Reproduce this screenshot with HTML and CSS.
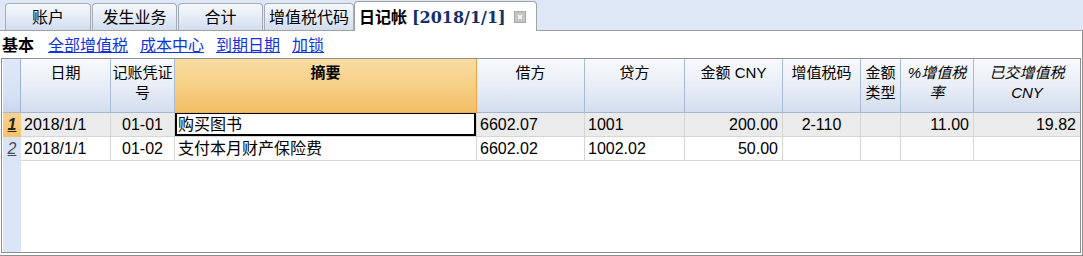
FILE: index.html
```html
<!DOCTYPE html>
<html lang="zh-CN">
<head>
<meta charset="utf-8">
<title>日记帐</title>
<link rel="stylesheet" href="styles.css">
</head>
<body>
<div class="tabbar">
  <div class="tab t1">账户</div>
  <div class="tab t2">发生业务</div>
  <div class="tab t3">合计</div>
  <div class="tab t4">增值税代码</div>
  <div class="tab active">
    <span class="tname">日记帐</span>
    <span class="tdate">[2018/1/1]</span>
    <svg class="close" width="12" height="12" viewBox="0 0 12 12">
      <rect x="0.5" y="0.5" width="11" height="11" fill="#c4c4c4" stroke="#a8a8a8"/>
      <path d="M4 4 L8 8 M8 4 L4 8" stroke="#ffffff" stroke-width="1.4"/>
    </svg>
  </div>
</div>
<div class="panel">
  <div class="toolbar">
    <span class="cur">基本</span>
    <a class="lnk" href="#">全部增值税</a>
    <a class="lnk" href="#">成本中心</a>
    <a class="lnk" href="#">到期日期</a>
    <a class="lnk" href="#">加锁</a>
  </div>
  <div class="grid">
    <div class="h rn"></div>
    <div class="h">日期</div>
    <div class="h">记账凭证号</div>
    <div class="h sel">摘要</div>
    <div class="h">借方</div>
    <div class="h">贷方</div>
    <div class="h">金额 CNY</div>
    <div class="h">增值税码</div>
    <div class="h">金额类型</div>
    <div class="h it">%增值税率</div>
    <div class="h it last">已交增值税CNY</div>

    <div class="n cur-n"><span>1</span></div>
    <div class="c on">2018/1/1</div>
    <div class="c on ctr">01-01</div>
    <div class="c on edit">购买图书</div>
    <div class="c on">6602.07</div>
    <div class="c on">1001</div>
    <div class="c on r">200.00</div>
    <div class="c on ctr">2-110</div>
    <div class="c on"></div>
    <div class="c on r">11.00</div>
    <div class="c on r last">19.82</div>

    <div class="n"><span>2</span></div>
    <div class="c">2018/1/1</div>
    <div class="c ctr">01-02</div>
    <div class="c">支付本月财产保险费</div>
    <div class="c">6602.02</div>
    <div class="c">1002.02</div>
    <div class="c r">50.00</div>
    <div class="c ctr"></div>
    <div class="c"></div>
    <div class="c r"></div>
    <div class="c r last"></div>

    <div class="n fill"></div>
    <div class="empty"></div>
  </div>
</div>
</body>
</html>
```

FILE: styles.css
```css
* { box-sizing: border-box; }
html, body { margin: 0; padding: 0; }
body {
  width: 1083px;
  height: 256px;
  overflow: hidden;
  background: #dde7f6;
  font-family: "Liberation Sans", "Noto Sans CJK SC", sans-serif;
  color: #000;
  display: flex;
  flex-direction: column;
}

/* ---------- tabs ---------- */
.tabbar {
  height: 30px;
  display: flex;
  align-items: flex-end;
  padding-left: 5px;
  flex: none;
}
.tab {
  height: 27px;
  border: 1px solid #a4acb8;
  border-bottom: none;
  border-radius: 4px 4px 0 0;
  background: linear-gradient(#f6f8fc 0%, #e6edf7 45%, #d2ddee 100%);
  font-size: 16px;
  line-height: 24px;
  padding-top: 2px;
  text-align: center;
  white-space: nowrap;
}
.t1 { width: 86px; margin-right: 1px; }
.t2 { width: 85px; margin-right: 1px; }
.t3 { width: 85px; margin-right: 1px; }
.t4 { width: 90px; }
.tab.active {
  width: 183px;
  height: 30px;
  margin-bottom: -1px;
  position: relative;
  z-index: 2;
  background: #fff;
  border-color: #a0a0a0;
  text-align: left;
  padding: 3px 0 0 4px;
  display: flex;
  align-items: center;
  align-self: flex-end;
}
.tname { font-weight: bold; line-height: 24px; }
.tdate {
  font-family: "DejaVu Serif", serif;
  font-weight: bold;
  font-size: 16px;
  color: #13306a;
  margin-left: 5px;
  line-height: 24px;
}
.close { margin-left: 8px; margin-top: -3px; flex: none; }

/* ---------- panel ---------- */
.panel {
  flex: 1;
  background: #fff;
  border-top: 1px solid #a0a0a0;
  border-right: 1px solid #8f8f8f;
  border-bottom: 1px solid #8f8f8f;
  display: flex;
  flex-direction: column;
  min-height: 0;
}
.toolbar {
  height: 27px;
  flex: none;
  display: flex;
  align-items: center;
  gap: 12px;
  padding: 3px 0 0 2px;
  font-size: 16px;
  line-height: 22px;
}
.cur { font-weight: bold; margin-right: 2px; }
.lnk { color: #1133dd; text-decoration: underline; }

/* ---------- grid ---------- */
.grid {
  flex: 1;
  margin: 0 1px 2px 1px;
  border: 1px solid #8e8e8e;
  padding-left: 1px;
  display: grid;
  grid-template-columns: 18px 90px 64px 302px 108px 100px 98px 78px 40px 73px 106px;
  grid-template-rows: 54px 24px 24px 1fr;
  min-height: 0;
}
.h {
  background: linear-gradient(#f7f9fd 0%, #e9eef7 50%, #d3ddee 100%);
  border-right: 1px solid #a7bbd8;
  border-bottom: 1px solid #a3b6d2;
  font-size: 15px;
  line-height: 20px;
  padding: 4px 1px 0;
  text-align: center;
}
.h.rn {
  background: linear-gradient(#dfe8f8 0%, #d5e1f5 70%, #c8d6ee 100%);
  border-right: 1px solid #9db4d6;
  padding: 0;
}
.h.sel {
  background: linear-gradient(#f9dda2 0%, #f6cf86 50%, #f2be64 100%);
  border-right: 1px solid #f0a444;
  border-bottom: 1px solid #e8b060;
  font-weight: bold;
}
.h.it { font-style: italic; }
.h.last, .c.last { border-right: none; }

.n {
  background: #d9e5f7;
  font-size: 16px;
  line-height: 23px;
  text-align: center;
  font-style: italic;
}
.n span { text-decoration: underline; color: #4a4a52; }
.n.cur-n { background: linear-gradient(#f9d391, #f5c36c); }
.n.cur-n span { font-weight: bold; color: #2a2418; }
.n.fill { background: #dae6f8; }

.c {
  border-right: 1px solid #d6d6d6;
  border-bottom: 1px solid #d6d6d6;
  font-size: 16px;
  line-height: 23px;
  padding: 0 3px;
  white-space: nowrap;
  overflow: hidden;
}
.c.on { background: #ebebeb; }
.c.r { text-align: right; padding-right: 4px; }
.c.ctr { text-align: center; }
.c.edit {
  background: #fff;
  box-shadow: inset 2px 1px 0 #000, inset -2px -2px 0 #000;
}
.empty { grid-column: 2 / -1; background: #fff; }
```
